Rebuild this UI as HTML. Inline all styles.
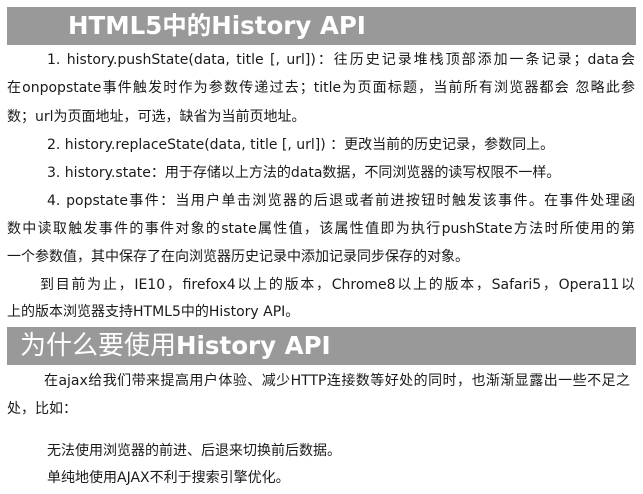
<!DOCTYPE html>
<html><head><meta charset="utf-8"><style>
body{margin:0;background:#fff;width:643px;height:494px;overflow:hidden;font-family:"DejaVu Sans","Noto Sans CJK SC",sans-serif;color:#1a1a1a;font-size:14px}
.h{position:absolute;left:7px;width:629px;height:38px;background:#999;color:#fff;font-weight:bold;font-size:24.5px;line-height:38px;font-family:"DejaVu Sans","Noto Sans CJK SC",sans-serif}
.h span{font-weight:normal;font-size:26px}
.r{position:absolute;left:7px;width:628px;height:28px;line-height:28px;white-space:nowrap;text-align:justify;text-align-last:justify;font-size:14px}
.n{text-align-last:left}
.l{position:absolute;white-space:nowrap;line-height:20px;font-size:14px}
</style></head><body>
<div class="h" style="top:7px;padding-left:61px;box-sizing:border-box">HTML5中的History API</div>
<div class="r" style="top:46px;left:47px;width:588px">1. history.pushState(data, title [, url])：往历史记录堆栈顶部添加一条记录；data会</div>
<div class="r" style="top:74px">在onpopstate事件触发时作为参数传递过去；title为页面标题，当前所有浏览器都会 忽略此参</div>
<div class="r n" style="top:103px">数；url为页面地址，可选，缺省为当前页地址。</div>
<div class="r n" style="top:131px;left:47px">2. history.replaceState(data, title [, url]) ：更改当前的历史记录，参数同上。</div>
<div class="r n" style="top:159px;left:47px">3. history.state：用于存储以上方法的data数据，不同浏览器的读写权限不一样。</div>
<div class="r" style="top:187px;left:47px;width:588px">4. popstate事件：当用户单击浏览器的后退或者前进按钮时触发该事件。在事件处理函</div>
<div class="r" style="top:215px">数中读取触发事件的事件对象的state属性值，该属性值即为执行pushState方法时所使用的第</div>
<div class="r n" style="top:243px">一个参数值，其中保存了在向浏览器历史记录中添加记录同步保存的对象。</div>
<div class="r" style="top:271px;left:40px;width:595px">到目前为止，IE10，firefox4以上的版本，Chrome8以上的版本，Safari5，Opera11以</div>
<div class="r n" style="top:298px">上的版本浏览器支持HTML5中的History API。</div>
<div class="h" style="top:327px;padding-left:13px;box-sizing:border-box"><span>为什么要使用</span>History API</div>
<div class="r" style="top:367px;left:44px;width:586px">在ajax给我们带来提高用户体验、减少HTTP连接数等好处的同时，也渐渐显露出一些不足之</div>
<div class="r n" style="top:395px">处，比如：</div>
<div class="l" style="top:441px;left:47px">无法使用浏览器的前进、后退来切换前后数据。</div>
<div class="l" style="top:468px;left:47px">单纯地使用AJAX不利于搜索引擎优化。</div>
</body></html>
